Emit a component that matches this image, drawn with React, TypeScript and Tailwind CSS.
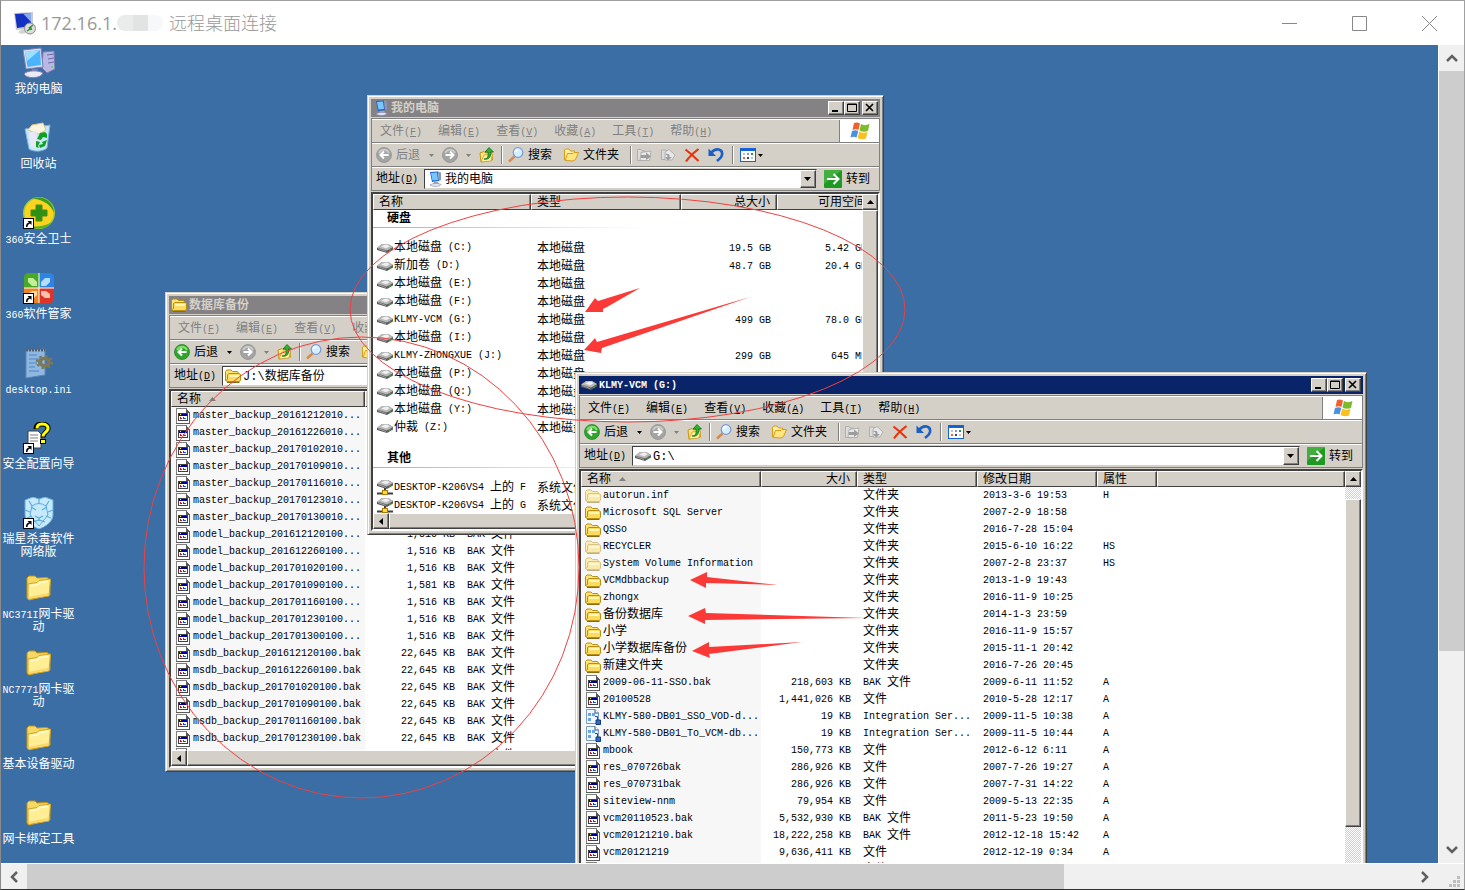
import {useId, type ReactNode} from 'react'

type Row = {
  name: string
  icon: 'folder' | 'hidden' | 'file' | 'package'
  size?: string
  type: string
  date?: string
  attr?: string
}

const FONT = "font-['Liberation_Mono','Noto_Sans_CJK_SC',monospace]"
const RAISED = 'bg-[#d4d0c8] border border-t-white border-l-white border-r-[#404040] border-b-[#404040] shadow-[inset_-1px_-1px_0_#808080]'

const backupRows: Row[] = [
  ...['20161212010', '20161226010', '20170102010', '20170109010', '20170116010', '20170123010', '20170130010'].map(
    (d): Row => ({name: `master_backup_${d}...`, icon: 'file', size: '4,123 KB', type: 'BAK 文件'}),
  ),
  {name: 'model_backup_201612120100...', icon: 'file', size: '1,516 KB', type: 'BAK 文件'},
  {name: 'model_backup_201612260100...', icon: 'file', size: '1,516 KB', type: 'BAK 文件'},
  {name: 'model_backup_201701020100...', icon: 'file', size: '1,516 KB', type: 'BAK 文件'},
  {name: 'model_backup_201701090100...', icon: 'file', size: '1,581 KB', type: 'BAK 文件'},
  {name: 'model_backup_201701160100...', icon: 'file', size: '1,516 KB', type: 'BAK 文件'},
  {name: 'model_backup_201701230100...', icon: 'file', size: '1,516 KB', type: 'BAK 文件'},
  {name: 'model_backup_201701300100...', icon: 'file', size: '1,516 KB', type: 'BAK 文件'},
  ...['201612120100', '201612260100', '201701020100', '201701090100', '201701160100', '201701230100', '201701300100'].map(
    (d): Row => ({name: `msdb_backup_${d}.bak`, icon: 'file', size: '22,645 KB', type: 'BAK 文件'}),
  ),
]

const driveRows: Row[] = [
  {name: 'autorun.inf', icon: 'hidden', type: '文件夹', date: '2013-3-6 19:53', attr: 'H'},
  {name: 'Microsoft SQL Server', icon: 'folder', type: '文件夹', date: '2007-2-9 18:58'},
  {name: 'QSSo', icon: 'folder', type: '文件夹', date: '2016-7-28 15:04'},
  {name: 'RECYCLER', icon: 'hidden', type: '文件夹', date: '2015-6-10 16:22', attr: 'HS'},
  {name: 'System Volume Information', icon: 'hidden', type: '文件夹', date: '2007-2-8 23:37', attr: 'HS'},
  {name: 'VCMdbbackup', icon: 'folder', type: '文件夹', date: '2013-1-9 19:43'},
  {name: 'zhongx', icon: 'folder', type: '文件夹', date: '2016-11-9 10:25'},
  {name: '备份数据库', icon: 'folder', type: '文件夹', date: '2014-1-3 23:59'},
  {name: '小学', icon: 'folder', type: '文件夹', date: '2016-11-9 15:57'},
  {name: '小学数据库备份', icon: 'folder', type: '文件夹', date: '2015-11-1 20:42'},
  {name: '新建文件夹', icon: 'folder', type: '文件夹', date: '2016-7-26 20:45'},
  {name: '2009-06-11-SSO.bak', icon: 'file', size: '218,603 KB', type: 'BAK 文件', date: '2009-6-11 11:52', attr: 'A'},
  {name: '20100528', icon: 'file', size: '1,441,026 KB', type: '文件', date: '2010-5-28 12:17', attr: 'A'},
  {name: 'KLMY-580-DB01_SSO_VOD-d...', icon: 'package', size: '19 KB', type: 'Integration Ser...', date: '2009-11-5 10:38', attr: 'A'},
  {name: 'KLMY-580-DB01_To_VCM-db...', icon: 'package', size: '19 KB', type: 'Integration Ser...', date: '2009-11-5 10:44', attr: 'A'},
  {name: 'mbook', icon: 'file', size: '150,773 KB', type: '文件', date: '2012-6-12 6:11', attr: 'A'},
  {name: 'res_070726bak', icon: 'file', size: '286,926 KB', type: '文件', date: '2007-7-26 19:27', attr: 'A'},
  {name: 'res_070731bak', icon: 'file', size: '286,926 KB', type: '文件', date: '2007-7-31 14:22', attr: 'A'},
  {name: 'siteview-nnm', icon: 'file', size: '79,954 KB', type: '文件', date: '2009-5-13 22:35', attr: 'A'},
  {name: 'vcm20110523.bak', icon: 'file', size: '5,532,930 KB', type: 'BAK 文件', date: '2011-5-23 19:50', attr: 'A'},
  {name: 'vcm20121210.bak', icon: 'file', size: '18,222,258 KB', type: 'BAK 文件', date: '2012-12-18 15:42', attr: 'A'},
  {name: 'vcm20121219', icon: 'file', size: '9,636,411 KB', type: '文件', date: '2012-12-19 0:34', attr: 'A'},
  {name: 'vcm20121220', icon: 'file', size: '9,636,411 KB', type: '文件', date: '2012-12-20 0:34', attr: 'A'},
]

const disks = [
  {name: '本地磁盘 (C:)', total: '19.5 GB', free: '5.42 GB'},
  {name: '新加卷 (D:)', total: '48.7 GB', free: '20.4 GB'},
  {name: '本地磁盘 (E:)'},
  {name: '本地磁盘 (F:)'},
  {name: 'KLMY-VCM (G:)', total: '499 GB', free: '78.0 GB'},
  {name: '本地磁盘 (I:)'},
  {name: 'KLMY-ZHONGXUE (J:)', total: '299 GB', free: '645 MB'},
  {name: '本地磁盘 (P:)'},
  {name: '本地磁盘 (Q:)'},
  {name: '本地磁盘 (Y:)'},
  {name: '仲裁 (Z:)'},
]

const menus = [
  ['文件', 'F'],
  ['编辑', 'E'],
  ['查看', 'V'],
  ['收藏', 'A'],
  ['工具', 'T'],
  ['帮助', 'H'],
]

// Latin runs are 6px per character, Chinese runs 12px per character
function Txt({children}: {children: string}) {
  return (
    <span className="text-[10px] whitespace-pre">
      {children.split(/([\u4e00-\u9fff]+)/).map((part, i) =>
        i % 2 ? (
          <span key={i} className="align-[-1px] text-[12px]">
            {part}
          </span>
        ) : (
          part
        ),
      )}
    </span>
  )
}

/* ---------- small icons ---------- */

function FolderIcon({faded}: {faded?: boolean}) {
  return (
    <svg viewBox="0 0 16 16" className={`size-4 shrink-0 ${faded ? 'opacity-50' : ''}`}>
      <path d="M.5 12.500V3.500L2 2H6L7.500 3.500H12.500L13.500 5V7" fill="#ffe27a" stroke="#b8900f" />
      <path d="M2.500 6.500L4 5.500H14L15.500 6.500V12L14.500 13.500H2L.5 12.500L2.500 11.500Z" fill="#fbdc60" stroke="#b8900f" />
      <path d="M4 7H14V9H4Z" fill="#fff7b8" />
      <path d="M2 14.500H14.500" stroke="#8a6c10" />
    </svg>
  )
}

function OpenFolderIcon() {
  return (
    <svg viewBox="0 0 16 16" className="size-4 shrink-0">
      <path d="M1.500 13V3L3 2H6L7.500 4H11.500V6.500" fill="#fff0a0" stroke="#d69a1c" />
      <path d="M2 13.500L4.500 6.500H10L11 5.500H15.500L12.500 12.500L10 14Z" fill="#ffe680" stroke="#d69a1c" />
    </svg>
  )
}

function FileIcon() {
  return (
    <svg viewBox="0 0 16 16" className="size-4 shrink-0" shapeRendering="crispEdges">
      <path d="M1 1h11l3 3v11H1z" fill="#fff" />
      <path d="M1 0h11v1H2v14H1z" fill="#808080" />
      <path d="M11 1h1v1h1v1h1v1h1v12H1v-1h13V5h-3z" fill="#5a5a5a" />
      <path d="M3 5h10v8H3z" fill="#404040" />
      <path d="M4 6h8v6H4z" fill="#fff" />
      <path d="M4 6h8v2H4z" fill="#0000a0" />
      <path d="M5 6h1v1H5z" fill="#ff0" />
      <path d="M5 9h1v2H5zM6 10h1v1H6z" fill="#e00000" />
      <path d="M8 9h1v1h1v1H8z" fill="#0040ff" />
      <path d="M10 10h1v1h-1z" fill="#00a040" />
    </svg>
  )
}

function PackageIcon() {
  return (
    <svg viewBox="0 0 16 16" className="size-4 shrink-0">
      <path d="M1.500 .5H10L13.500 4V14.500H1.500Z" fill="#eef6ff" stroke="#7d9cc4" />
      <path d="M10 .5V4H13.500" fill="#fff" stroke="#34507a" />
      <path d="M3 4h3v3H3zM7 4h3v3H7zM3 9h3v3H3z" fill="#68a4e8" />
      <path d="M10 7.500h2.500V12" fill="none" stroke="#1c50a0" />
      <path d="M11 11h4.500v4.500H11z" fill="#2f6cc8" stroke="#12397c" />
    </svg>
  )
}

function DriveIcon({network}: {network?: boolean}) {
  return (
    <svg viewBox="0 0 16 16" className="size-4 shrink-0">
      <g transform={network ? 'translate(0 -4)' : ''}>
        <path d="M0 8L5 4H11L16 7V9.500L10 13L0 10Z" fill="#5c5c5c" />
        <path d="M0 7.500L5 4H11L16 7L10 10.500Z" fill="#b9b9b9" />
        <path d="M4 6.500L8 4.800H11L12.500 6.500L9 8.200Z" fill="#f0f0f0" />
        <path d="M1 8.500L9 11.500" stroke="#a0a0a0" />
        <path d="M12 10h2" stroke="#30c030" />
      </g>
      {network && (
        <>
          <path d="M8 8V11M0 13.500H16" stroke="#404040" strokeWidth="2" />
          <rect x="5.500" y="10.500" width="5" height="4" fill="#ffd84a" stroke="#b07a00" />
        </>
      )}
    </svg>
  )
}

function ComputerIcon() {
  return (
    <svg viewBox="0 0 16 16" className="size-4 shrink-0">
      <path d="M3 1L11 .5L12 10L5 11Z" fill="#1d62d8" />
      <path d="M4 2L10 1.500L11 9L5.500 9.500Z" fill="#74c8ff" />
      <path d="M11 .5L14 1.500V9L12 10Z" fill="#8c96b4" />
      <path d="M7 11H11L12 13H6Z" fill="#9aa2c0" />
      <path d="M3 14C5 12 12 12 14 13.500C13 16 5 16 3 14Z" fill="#e4e6f2" stroke="#7f87a8" strokeWidth=".6" />
    </svg>
  )
}

function NavIcon({back, enabled}: {back?: boolean; enabled?: boolean}) {
  return (
    <svg viewBox="0 0 16 16" className="size-4 shrink-0">
      <circle cx="8" cy="8" r="7.500" fill={enabled ? '#2fa52b' : '#a3a3a3'} stroke={enabled ? '#1c7d1c' : '#8c8c8c'} strokeWidth=".7" />
      <path d="M3 6a5.500 5.500 0 0 1 10 0" stroke={enabled ? '#84e070' : '#c9c9c9'} strokeWidth="2" fill="none" />
      <path
        d={back ? 'M12.500 8H5M8 4.500L4.500 8L8 11.500' : 'M3.500 8H11M8 4.500L11.500 8L8 11.500'}
        stroke="#fff"
        strokeWidth="2"
        fill="none"
      />
    </svg>
  )
}

function UpIcon() {
  return (
    <svg viewBox="0 0 16 16" className="size-4 shrink-0">
      <path d="M1 6L5 4.500L6.500 6L12.500 5L13.500 13L2 15Z" fill="#ffe680" stroke="#c69214" />
      <path d="M5 8L13.500 7L12 14L2 15Z" fill="#fff2a0" stroke="#c69214" strokeWidth=".7" />
      <path d="M5 12C9 12 9.500 9 9 5H6L10 .5L14.500 5H11.500C12 9 11 13 5 12Z" fill="#2fb32d" stroke="#0f6c14" strokeWidth=".8" />
    </svg>
  )
}

function SearchIcon() {
  return (
    <svg viewBox="0 0 16 16" className="size-4 shrink-0">
      <path d="M1 14.500L6.500 9.500" stroke="#d98a4b" strokeWidth="2.500" />
      <circle cx="10" cy="5.500" r="4.800" fill="#d6f0ff" stroke="#7a98dc" strokeWidth="1.200" />
      <path d="M7.500 5A3 3 0 0 1 10.500 2.500" stroke="#fff" strokeWidth="1.500" fill="none" />
    </svg>
  )
}

function MoveIcon({copy}: {copy?: boolean}) {
  return (
    <svg viewBox="0 0 16 16" className="size-4 shrink-0" strokeWidth=".8">
      {copy ? (
        <>
          <path d="M1.500 3H5L9 5V12.500H1.500Z" fill="#dcdcdc" stroke="#a4a4a4" />
          <path d="M5 5L9 2.500L15 8L12 13H5Z" fill="#e8e8e8" stroke="#a4a4a4" />
          <path d="M5 7C9 6 10 8 9.500 10H12L8 13.500L5 10H7.500C8 9 7 8 5 7Z" fill="#9c9c9c" />
        </>
      ) : (
        <>
          <path d="M1.500 2.500H5L6 4H9V13.500H1.500Z" fill="#dcdcdc" stroke="#a4a4a4" />
          <path d="M5 5.500L15 4L13.500 13.500H4Z" fill="#e8e8e8" stroke="#a4a4a4" />
          <path d="M5 8H10V5.500L15 9.500L10 13V11H5Z" fill="#9c9c9c" />
        </>
      )}
    </svg>
  )
}

function DeleteIcon() {
  return (
    <svg viewBox="0 0 16 16" className="size-4 shrink-0">
      <path d="M1.500 2.500C6 6 11 10.500 14.500 14M14.500 2C10 5.500 5 10 2 14.500" stroke="#e8330c" strokeWidth="2.200" fill="none" />
    </svg>
  )
}

function UndoIcon() {
  return (
    <svg viewBox="0 0 16 16" className="size-4 shrink-0">
      <path d="M3 6C8 0 15 2 14 8C13.500 11 11.500 12 9 14" stroke="#1c5fc4" strokeWidth="2.600" fill="none" />
      <path d="M.5 1.500V9H8L5.500 6.500Z" fill="#1c5fc4" />
    </svg>
  )
}

function ViewsIcon() {
  return (
    <svg viewBox="0 0 16 16" className="size-4 shrink-0" shapeRendering="crispEdges">
      <path d="M0 1h16v14H0z" fill="#1463d2" />
      <path d="M1 4h14v10H1z" fill="#fff" />
      <path d="M3 6h2v2H3zM11 10h2v2h-2z" fill="#b9c4d6" />
      <path d="M7 6h2v2H7z" fill="#8098d0" />
      <path d="M11 6h2v2h-2z" fill="#18a030" />
      <path d="M3 10h2v2H3z" fill="#f06030" />
      <path d="M7 10h2v2H7z" fill="#2048b0" />
    </svg>
  )
}

function GoIcon() {
  return (
    <svg viewBox="0 0 18 18" className="size-[18px] shrink-0">
      <rect width="18" height="18" rx="1" fill="#1e9a22" />
      <path d="M0 0H18L0 14Z" fill="#58bd52" opacity=".6" />
      <path d="M3 9H14M9.500 4L14.500 9L9.500 14" stroke="#fff" strokeWidth="2" fill="none" />
    </svg>
  )
}

function WindowsFlag() {
  return (
    <svg viewBox="0 0 20 18" className="h-[18px] w-5">
      <path d="M4 1C6.500 0 8 .5 10 1.500L8.500 8C6.500 7 4.500 7 2.500 8Z" fill="#f0602c" />
      <path d="M11 2C13.500 3.500 16 3.500 19.500 2L18 9C15 10 12.500 10 9.500 8.500Z" fill="#7cbb2c" />
      <path d="M2 9C4.500 8 6.500 8 8.300 9L6.500 15.500C4.500 14.500 2.500 14.500 .5 15.500Z" fill="#4a8fe0" />
      <path d="M9.300 9.500C12 11 14.500 11 17.500 10L16 16.500C13 17.500 10.500 17.500 7.500 16Z" fill="#f8c020" />
    </svg>
  )
}

function Caret({up, small, className = 'fill-black'}: {up?: boolean; small?: boolean; className?: string}) {
  return (
    <svg viewBox="0 0 7 4" className={`shrink-0 ${small ? 'h-[3px] w-[5px]' : 'h-1 w-[7px]'} ${className}`}>
      <path d={up ? 'M0 4L3.500 0L7 4Z' : 'M0 0H7L3.500 4Z'} />
    </svg>
  )
}

/* ---------- window frame ---------- */

function CaptionButton({label, children}: {label: string; children: ReactNode}) {
  return (
    <button aria-label={label} className={`flex h-[14px] w-4 items-center justify-center ${RAISED}`}>
      <svg viewBox="0 0 12 10" className="h-[10px] w-3 fill-none stroke-black">
        {children}
      </svg>
    </button>
  )
}

function Separator() {
  return <span className="h-[18px] w-0.5 shrink-0 border-r border-l border-r-white border-l-[#808080]" />
}

type FrameProps = {
  title: string
  icon: ReactNode
  address: string
  place: string
  active?: boolean
  canGoBack?: boolean
  children: ReactNode
}

function ExplorerWindow({title, icon, address, place, active, canGoBack, children}: FrameProps) {
  const id = useId()
  const band = 'flex h-6 items-center border-t border-b border-t-white border-b-[#808080]'
  return (
    <section
      className={`absolute flex flex-col border border-t-[#d4d0c8] border-l-[#d4d0c8] border-r-[#404040] border-b-[#404040] bg-[#d4d0c8] p-[3px] text-[12px] leading-4 shadow-[inset_1px_1px_0_#fff,inset_-1px_-1px_0_#808080] ${FONT} ${place}`}
    >
      <header
        className={`flex h-[18px] shrink-0 items-center pr-0.5 pl-0.5 font-bold ${active ? 'bg-[#0a246a] text-white' : 'bg-[#848284] text-[#d4d0c8]'}`}
      >
        {icon}
        <h2 className="ml-0.5 flex-1">
          <Txt>{title}</Txt>
        </h2>
        <CaptionButton label="最小化">
          <path d="M2 8H8" strokeWidth="2" />
        </CaptionButton>
        <CaptionButton label="最大化">
          <path d="M1.500 1H10.500V8.500H1.500Z M1 1.500H11" />
        </CaptionButton>
        <span className="w-0.5" />
        <CaptionButton label="关闭">
          <path d="M2 1L9 8M9 1L2 8" strokeWidth="1.600" />
        </CaptionButton>
      </header>

      <div className="mt-px shrink-0 border-t border-r border-l border-[#808080]">
        <nav className={`${band} ${active ? 'text-black' : 'text-[#808080]'}`}>
          {menus.map(([label, key]) => (
            <button key={key} className="shrink-0 px-2 pt-0.5 whitespace-nowrap">
              {label}
              <span className="text-[10px]">
                (<u>{key}</u>)
              </span>
            </button>
          ))}
          <span className="ml-auto flex h-[22px] w-10 items-center justify-center border-l border-[#808080] bg-white">
            <WindowsFlag />
          </span>
        </nav>

        <div className={`${band} overflow-hidden pl-1`}>
          <button disabled={!canGoBack} className="flex shrink-0 items-center gap-1 disabled:text-[#808080]">
            <NavIcon back enabled={canGoBack} />
            <span className="pt-0.5">后退</span>
          </button>
          <button aria-label="后退列表" className="ml-2 flex px-px">
            <Caret small className={canGoBack ? 'fill-black' : 'fill-[#808080]'} />
          </button>
          <button aria-label="前进" className="ml-[7px] flex">
            <NavIcon />
          </button>
          <button aria-label="前进列表" className="ml-[7px] flex px-px">
            <Caret small className="fill-[#808080]" />
          </button>
          <button aria-label="向上" className="mr-1.5 ml-[7px] flex">
            <UpIcon />
          </button>
          <Separator />
          <button className="ml-[5px] flex shrink-0 items-center gap-1">
            <SearchIcon />
            <span className="pt-0.5">搜索</span>
          </button>
          <button className="mr-[11px] ml-[11px] flex shrink-0 items-center gap-1">
            <OpenFolderIcon />
            <span className="pt-0.5">文件夹</span>
          </button>
          <Separator />
          <button aria-label="移到" className="ml-1 flex">
            <MoveIcon />
          </button>
          <button aria-label="复制到" className="ml-2 flex">
            <MoveIcon copy />
          </button>
          <button aria-label="删除" className="ml-2 flex">
            <DeleteIcon />
          </button>
          <button aria-label="撤消" className="mr-2 ml-2 flex">
            <UndoIcon />
          </button>
          <Separator />
          <button aria-label="查看方式" className="ml-1.5 flex items-center gap-0.5">
            <ViewsIcon />
            <Caret small />
          </button>
        </div>

        <div className={`${band} pl-1`}>
          <label htmlFor={id} className="shrink-0 pt-px whitespace-nowrap">
            地址
            <span className="text-[10px]">
              (<u>D</u>)
            </span>
          </label>
          <div className="ml-1.5 flex h-5 min-w-0 flex-1 items-center border border-t-[#404040] border-l-[#404040] border-r-[#d4d0c8] border-b-[#d4d0c8] bg-white pl-0.5">
            {icon}
            <input id={id} defaultValue={address} className="ml-0.5 min-w-0 flex-1 bg-transparent pt-0.5 outline-none" />
            <button aria-label="地址列表" className={`flex h-[18px] w-4 shrink-0 items-center justify-center ${RAISED}`}>
              <Caret />
            </button>
          </div>
          <button className="mr-[9px] ml-[7px] flex shrink-0 items-center gap-1">
            <GoIcon />
            <span className="pt-0.5">转到</span>
          </button>
        </div>
      </div>

      <div className="mt-px flex min-h-0 flex-1 border-2 border-t-[#404040] border-l-[#404040] border-r-white border-b-white bg-white">
        {children}
      </div>
    </section>
  )
}

function VScroll({children}: {children: ReactNode}) {
  return (
    <div className="flex w-4 shrink-0 flex-col bg-[repeating-conic-gradient(#d4d0c8_0_25%,#fff_0_50%)] bg-[length:2px_2px]">
      <button aria-label="向上滚动" className={`flex h-4 shrink-0 items-center justify-center ${RAISED}`}>
        <Caret up />
      </button>
      {children}
    </div>
  )
}

function HScroll() {
  return (
    <div className="flex h-4 shrink-0">
      <button aria-label="向左滚动" className={`flex w-4 shrink-0 items-center justify-center ${RAISED}`}>
        <svg viewBox="0 0 4 7" className="h-[7px] w-1">
          <path d="M4 0V7L0 3.500Z" />
        </svg>
      </button>
      <div className={`flex-1 ${RAISED}`} />
    </div>
  )
}

function Th({children, right, sorted}: {children?: string; right?: boolean; sorted?: boolean}) {
  return (
    <th className="border border-t-white border-l-white border-r-[#404040] border-b-[#404040] bg-[#d4d0c8] p-0 font-normal shadow-[inset_-1px_0_0_#808080]">
      <div className={`flex h-[14px] items-center gap-2 pr-1.5 pl-[5px] leading-4 whitespace-nowrap ${right ? 'justify-end' : ''}`}>
        {children && <span className="pt-px">{children}</span>}
        {sorted && <Caret up className="fill-[#808080]" />}
      </div>
    </th>
  )
}

function Cell({children, right}: {children?: string; right?: boolean}) {
  return (
    <td className="p-0">
      <div className={`h-[17px] overflow-hidden px-1.5 ${right ? 'text-right' : ''}`}>{children && <Txt>{children}</Txt>}</div>
    </td>
  )
}

function FileTable({rows, nameWidth, details}: {rows: Row[]; nameWidth: string; details?: boolean}) {
  return (
    <table className="w-full table-fixed border-separate border-spacing-0 text-left">
      <colgroup>
        <col className={nameWidth} />
        <col className="w-[96px]" />
        <col className="w-[120px]" />
        {details && <col className="w-[120px]" />}
        {details && <col className="w-[60px]" />}
        <col />
      </colgroup>
      <thead>
        <tr>
          <Th sorted>名称</Th>
          <Th right>大小</Th>
          <Th>类型</Th>
          {details && <Th>修改日期</Th>}
          {details && <Th>属性</Th>}
          <Th />
        </tr>
      </thead>
      <tbody>
        {rows.map((r) => (
          <tr key={r.name}>
            <td className="bg-[#f7f7f7] p-0">
              <div className="flex h-[17px] items-center gap-0.5 overflow-hidden pl-1">
                {r.icon === 'file' && <FileIcon />}
                {r.icon === 'package' && <PackageIcon />}
                {(r.icon === 'folder' || r.icon === 'hidden') && <FolderIcon faded={r.icon === 'hidden'} />}
                <Txt>{r.name}</Txt>
              </div>
            </td>
            <Cell right>{r.size}</Cell>
            <Cell>{r.type}</Cell>
            {details && <Cell>{r.date}</Cell>}
            {details && <Cell>{r.attr}</Cell>}
            <td />
          </tr>
        ))}
      </tbody>
    </table>
  )
}

function GroupRow({children}: {children: string}) {
  return (
    <tr>
      <th colSpan={4} className="p-0 pb-[11px] text-left">
        <div className="h-[17px] pt-px pl-[14px]">{children}</div>
        <div className="h-px w-[270px] bg-linear-to-r from-[#8fb4ec] to-white" />
      </th>
    </tr>
  )
}

function ComputerTable() {
  return (
    <table className="w-[500px] table-fixed border-separate border-spacing-0 text-left">
      <colgroup>
        <col className="w-[158px]" />
        <col className="w-[150px]" />
        <col className="w-[96px]" />
        <col className="w-[96px]" />
      </colgroup>
      <thead>
        <tr>
          <Th>名称</Th>
          <Th>类型</Th>
          <Th right>总大小</Th>
          <Th right>可用空间</Th>
        </tr>
      </thead>
      <tbody>
        <GroupRow>硬盘</GroupRow>
        {disks.map((d) => (
          <tr key={d.name} className="h-[18px]">
            <td className="p-0">
              <div className="flex h-[18px] items-center gap-px pl-1">
                <DriveIcon />
                <Txt>{d.name}</Txt>
              </div>
            </td>
            <Cell>本地磁盘</Cell>
            <Cell right>{d.total}</Cell>
            <Cell right>{d.free}</Cell>
          </tr>
        ))}
      </tbody>
      <tbody>
        <tr className="h-[13px]" />
        <GroupRow>其他</GroupRow>
        {['F', 'G'].map((letter) => (
          <tr key={letter}>
            <td className="p-0">
              <div className="flex h-[18px] items-center gap-px overflow-hidden pl-1">
                <DriveIcon network />
                <Txt>{`DESKTOP-K206VS4 上的 ${letter}`}</Txt>
              </div>
            </td>
            <Cell>系统文件夹</Cell>
          </tr>
        ))}
      </tbody>
    </table>
  )
}

/* ---------- desktop ---------- */

function Shortcut() {
  return (
    <>
      <rect x=".5" y="21.500" width="10" height="10" fill="#fff" stroke="#000" />
      <path d="M3 30C3 27 4 26 6 25.500L4.500 24H8.500V28L7 26.500C5 27.500 4.500 28.500 4.500 30Z" />
    </>
  )
}

function BigFolder() {
  return (
    <>
      <path d="M4 6L6 4H12L14 6L24 5.500L27 8V23L6 28L4 26Z" fill="#f5d866" stroke="#c7950e" />
      <path d="M5 12L14 10.500L16 8.500L27.500 7L26 24L5 27.500Z" fill="#ffee94" stroke="#d4a41c" />
      <path d="M7 14L15 12.500L17 10.500L25 9.500" stroke="#fffbd0" strokeWidth="1.500" fill="none" />
      <path d="M6 25L25 21V23L6 27Z" fill="#fad768" />
    </>
  )
}

const desktopIcons: {label: string; art: ReactNode}[] = [
  {
    label: '我的电脑',
    art: (
      <>
        <path d="M20 5L31 4L32 22L24 26L19 21Z" fill="#b9b7e4" stroke="#7d78b0" />
        <path d="M24 8L31 7M25 12L31 11M25 16L31 15" stroke="#6f6ba4" />
        <path d="M28 19h2v2h-2z" fill="#60e060" />
        <path d="M0 3L18 1L20 20L3 22Z" fill="#dedef4" stroke="#7f7eb4" />
        <path d="M2 5L17 3L18 18L4.500 20Z" fill="#4cb4fc" />
        <path d="M2 5L17 3L4 14Z" fill="#9ce0ff" />
        <path d="M9 22H15V27H9Z" fill="#7c7ab4" />
        <path d="M1 27C4 23 16 23 20 26C18 32 3 32 1 27Z" fill="#ecebf8" stroke="#7e7cae" />
      </>
    ),
  },
  {
    label: '回收站',
    art: (
      <>
        <path d="M2 7L27 3L24 26C20 30 10 30 6 27Z" fill="#c8e8fa" stroke="#74aede" />
        <path d="M5 8L9 3L20 1L23 8L16 12Z" fill="#fdf5dc" stroke="#dcc68c" />
        <path d="M6 11L14 8L13 26L8 25Z" fill="#e9e8f8" />
        <path d="M14 17L17 11L22 10L24 12V16L20 15L18 18Z M24 18L22 24L17 26L16 23L20 22L19 20Z M13 19L17 20L15 24L16 26L13 25Z" fill="#12a022" />
      </>
    ),
  },
  {
    label: '360安全卫士',
    art: (
      <>
        <circle cx="16" cy="16" r="16" fill="#9cd030" />
        <circle cx="16" cy="16" r="14.500" fill="#fcd420" />
        <path d="M10 1.500A15.500 15.500 0 0 1 31 16C28 8 21 3 10 1.500Z" fill="#3a9c1c" />
        <path d="M8 29.500A16 16 0 0 0 29 25C22 29 16 30 8 29.500Z" fill="#5cb024" />
        <path d="M13 8H19V13H24V19H19V24H13V19H8V13H13Z" fill="#2f9018" stroke="#4a8c10" />
        <Shortcut />
      </>
    ),
  },
  {
    label: '360软件管家',
    art: (
      <>
        <path d="M1 4L4 1H16V16H1Z" fill="#48a828" />
        <path d="M16 1H28L31 4V16H16Z" fill="#2c84e4" />
        <path d="M1 16H16V31H1Z" fill="#f08420" />
        <path d="M16 16H31V28L28 31H16Z" fill="#dc3428" />
        <path d="M1 16H31M16 1V31" stroke="#fff" />
        <path d="M5 6H10L14 10V14H9L5 10Z" fill="#c4ee98" />
        <path d="M27 6H22L18 10V14H23L27 10Z" fill="#b4dcfc" />
        <path d="M5 27H10L14 23V19H9L5 22Z" fill="#fcdc9c" />
        <path d="M27 26H22L18 23V19H23L27 22Z" fill="#fcc0b0" />
        <Shortcut />
      </>
    ),
  },
  {
    label: 'desktop.ini',
    art: (
      <>
        <path d="M3 3L22 2V28L3 31Z" fill="#8fb8e0" stroke="#5c86b4" />
        <path d="M6 8H14M6 12H18M6 16H14M6 20H12M6 24H16" stroke="#4c84c8" />
        <path d="M3 3H22" stroke="#54606c" strokeWidth="3" strokeDasharray="2 1" />
        <g fill="none" stroke="#7d7857" transform="translate(0 3) scale(1 .8)">
          <circle cx="21.500" cy="15" r="4.500" strokeWidth="4" />
          <circle cx="21.500" cy="15" r="7.500" strokeWidth="2.500" strokeDasharray="3 2.900" />
        </g>
      </>
    ),
  },
  {
    label: '安全配置向导',
    art: (
      <>
        <path d="M5 9H15L18 12V26H5Z" fill="#fff" stroke="#404040" />
        <path d="M7 13H15M7 16H15M7 19H15" stroke="#808080" />
        <path d="M13 7C13 3 16 2 19 2C24 2 26 5 24.500 8C23 11 20 11 20 15.500" fill="none" stroke="#000" strokeWidth="5" />
        <path d="M14 6.500C14 3 16 2 19 2C24 2 26 5 24.500 8C23 11 20 11 20 14.500" fill="none" stroke="#ff0" strokeWidth="3" />
        <rect x="17.500" y="17.500" width="5" height="4" fill="#ff0" stroke="#000" />
        <Shortcut />
      </>
    ),
  },
  {
    label: '瑞星杀毒软件网络版',
    art: (
      <>
        <path d="M2 3L10 0L16 2L22 0L30 3V18C30 25 22 30 16 32C10 30 2 25 2 18Z" fill="#c6e9fb" stroke="#64aadc" />
        <path
          d="M8 10L13 13M24 10L19 13M12 19L16 21L20 19M16 21V24M10 25L16 23L22 25M6 4L9 9M26 4L23 9M2 13L7 15M30 13L25 15M4 21L9 19M28 21L23 19M16 2V6"
          fill="none"
          stroke="#5cacdf"
          strokeWidth="1.200"
        />
        <path d="M9 9Q16 4 23 9L25 18L16 29L7 18Z" fill="none" stroke="#5cacdf" />
        <Shortcut />
      </>
    ),
  },
  {label: 'NC371I网卡驱动', art: <BigFolder />},
  {label: 'NC7771网卡驱动', art: <BigFolder />},
  {label: '基本设备驱动', art: <BigFolder />},
  {label: '网卡绑定工具', art: <BigFolder />},
]

function Markup() {
  return (
    <svg className="pointer-events-none absolute inset-0 size-full" fill="none" stroke="#f04040">
      <ellipse cx="626.500" cy="308.500" rx="277.500" ry="112.500" />
      <ellipse cx="360.500" cy="566.500" rx="217.500" ry="230.500" />
      <g fill="#fb3a38" stroke="none">
        <path d="M584 311L594 297L597 300L639 287L606 306L602 308V311Z" />
        <path d="M583 349L594 337L596 341L749 296L601 347L600 352Z" />
        <path d="M689 579L706 571V576L777 584L705 582V587Z" />
        <path d="M687 615L704 607L705 612L865 617L704 619V623Z" />
        <path d="M691 650L708 641V646L801 641L708 653L709 657Z" />
      </g>
    </svg>
  )
}

function Chevron({d, label}: {d: string; label: string}) {
  return (
    <button aria-label={label} className="flex size-[26px] shrink-0 items-center justify-center">
      <svg viewBox="0 0 12 12" className="size-3 fill-none stroke-[#606060] stroke-[2.5]">
        <path d={d} />
      </svg>
    </button>
  )
}

export default function App() {
  return (
    <div className="relative flex h-screen flex-col overflow-hidden border border-t-[#a0a0a0] border-r-[#a0a0a0] border-b-[#303030] border-l-[#8a8a8a] bg-[#f0f0f0]">
      <header className="flex h-11 shrink-0 items-center bg-white pl-3 text-[#999]">
        <svg viewBox="0 0 24 24" className="size-6">
          <path d="M1 2L20 1V17L3 19Z" fill="#c6cad4" />
          <path d="M2 3L18 2V15L4 17Z" fill="#1430c0" />
          <path d="M10 2.500L18 2V11Z" fill="#88a8f0" />
          <path d="M5 21L9 18H14V22L8 23Z" fill="#d4d4d4" />
          <circle cx="17" cy="17.500" r="5.500" fill="#dcdcdc" stroke="#8c8c8c" />
          <path d="M14 20L17 18L16 16M20 14L17.500 16L18.500 19" stroke="#309030" strokeWidth="1.500" fill="none" />
        </svg>
        <h1 className="ml-1 flex items-center font-['Open_Sans','Noto_Sans_CJK_SC',sans-serif] text-[18px] leading-6">
          172.16.1.
          <span className="flex h-4 w-[46px] overflow-hidden rounded-full bg-[#f7f8f9]">
            <span className="w-4 bg-[#eaebeb]" />
            <span className="w-[15px] bg-[#e2e3e3]" />
          </span>
          <span className="ml-1.5 font-light">远程桌面连接</span>
        </h1>
        <div className="mr-[27px] ml-auto flex gap-[55px]">
          {[
            ['最小化', 'M0 7.500H15'],
            ['最大化', 'M.5 .5H14.500V14.500H.5Z'],
            ['关闭', 'M0 0L15 15M15 0L0 15'],
          ].map(([label, d]) => (
            <button key={label} aria-label={label}>
              <svg viewBox="0 0 15 15" className="size-[15px] fill-none stroke-[#888]">
                <path d={d} />
              </svg>
            </button>
          ))}
        </div>
      </header>

      <div className="flex min-h-0 flex-1">
        <main className="relative min-w-0 flex-1 overflow-hidden bg-[#3a6ea5]">
          <div className={`flex w-[75px] flex-col pt-0.5 text-white ${FONT}`}>
            {desktopIcons.map(({label, art}) => (
              <button key={label} className="flex h-[75px] shrink-0 flex-col items-center gap-[5px]">
                <svg viewBox="0 0 32 32" className="size-8 shrink-0 fill-black">
                  {art}
                </svg>
                <span className="w-[74px] text-[12px] leading-3 break-all">
                  {/^[a-z.]+$/.test(label) ? (
                    <Txt>{label}</Txt>
                  ) : (
                    <>
                      <span className="text-[10px]">{label.match(/^[A-Z0-9]*/)}</span>
                      {label.replace(/^[A-Z0-9]*/, '')}
                    </>
                  )}
                </span>
              </button>
            ))}
          </div>

          <ExplorerWindow
            title="数据库备份"
            icon={<FolderIcon />}
            address="J:\数据库备份"
            place="left-[164px] top-[247px] h-[480px] w-[560px]"
            canGoBack
          >
            <div className="flex min-w-0 flex-1 flex-col">
              <div className="min-h-0 flex-1 overflow-hidden">
                <FileTable rows={backupRows} nameWidth="w-[194px]" />
              </div>
              <HScroll />
            </div>
          </ExplorerWindow>

          <ExplorerWindow
            title="我的电脑"
            icon={<ComputerIcon />}
            address="我的电脑"
            place="left-[366px] top-[50px] h-[440px] w-[517px]"
          >
            <div className="flex min-w-0 flex-1 flex-col">
              <div className="min-h-0 flex-1 overflow-hidden">
                <ComputerTable />
              </div>
              <HScroll />
            </div>
            <VScroll>
              <div className={`flex-1 ${RAISED}`} />
            </VScroll>
          </ExplorerWindow>

          <ExplorerWindow
            title="KLMY-VCM (G:)"
            icon={<DriveIcon />}
            address="G:\"
            place="left-[574px] top-[327px] h-[540px] w-[792px]"
            active
            canGoBack
          >
            <div className="min-w-0 flex-1 overflow-hidden">
              <FileTable rows={driveRows} nameWidth="w-[180px]" details />
            </div>
            <VScroll>
              <div className={`mt-3 h-[328px] ${RAISED}`} />
            </VScroll>
          </ExplorerWindow>
        </main>

        <div className="flex w-[26px] shrink-0 flex-col border-l border-white">
          <Chevron label="向上滚动" d="M1 9L6 4L11 9" />
          <div className="flex-[580] bg-[#cdcdcd]" />
          <div className="flex-[186]" />
          <Chevron label="向下滚动" d="M1 3L6 8L11 3" />
        </div>
      </div>

      <div className="flex h-[26px] shrink-0 border-t border-white">
        <Chevron label="向左滚动" d="M9 1L4 6L9 11" />
        <div className="flex-[1037] bg-[#cdcdcd]" />
        <div className="flex-[348]" />
        <Chevron label="向右滚动" d="M3 1L8 6L3 11" />
        <svg viewBox="0 0 26 26" className="size-[26px] shrink-0 fill-[#bfbfbf]">
          <path d="M19 12h3v3h-3zM15 16h3v3h-3zM19 16h3v3h-3zM11 20h3v3h-3zM15 20h3v3h-3zM19 20h3v3h-3z" />
        </svg>
      </div>

      <Markup />
    </div>
  )
}
